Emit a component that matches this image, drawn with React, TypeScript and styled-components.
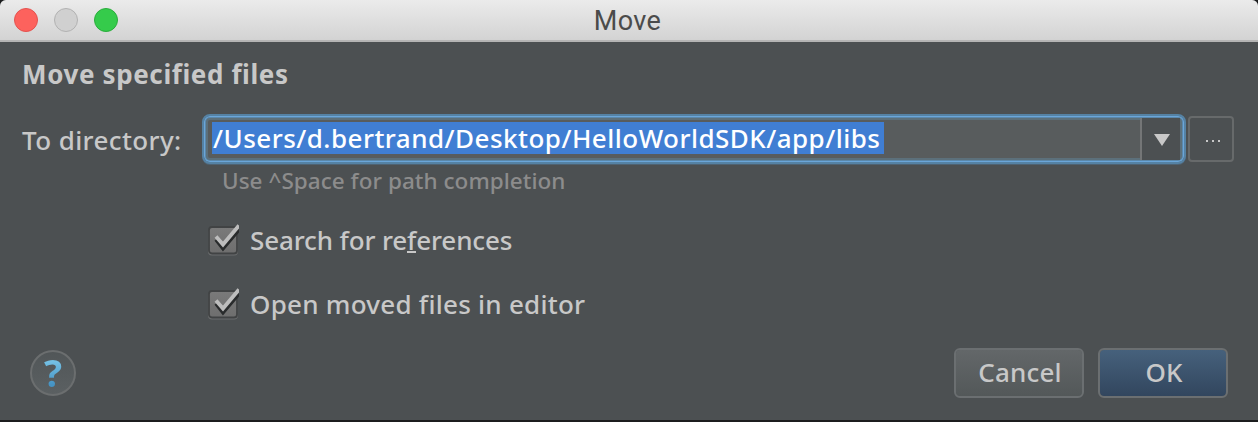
import React from "react";
import styled, { createGlobalStyle } from "styled-components";

const Global = createGlobalStyle`
  * { box-sizing: border-box; }
  body { margin: 0; background: #1c1d1e; overflow: hidden; }
`;

const Dialog = styled.div`
  width: 1258px;
  height: 420px;
  display: flex;
  flex-direction: column;
  background: #4c5052;
  border-radius: 6px 6px 0 0;
  overflow: hidden;
  color: #c8c8c8;
  font: 500 26px/32px "Noto Sans", sans-serif;
  white-space: nowrap;
`;

const TitleBar = styled.header`
  display: grid;
  grid-template-columns: 1fr auto 1fr;
  align-items: center;
  height: 42px;
  flex: none;
  padding: 0 14px;
  background: linear-gradient(#ebebeb, #d3d3d3);
  border-bottom: 2px solid #b4b4b4;
`;

const Lights = styled.div`
  display: flex;
  gap: 16px;
`;

const Light = styled.span<{ $fill: string; $edge: string }>`
  width: 24px;
  height: 24px;
  border-radius: 50%;
  background: ${(p) => p.$fill};
  border: 1px solid ${(p) => p.$edge};
`;

const Title = styled.h1`
  margin: 2px 3px 0 0;
  color: #4b4b4b;
  font: 400 27px/38px Roboto, sans-serif;
  letter-spacing: 0.4px;
`;

const Heading = styled.h2`
  margin: 16px 0 0 22px;
  font-size: 26px;
  font-weight: 700;
  line-height: 32px;
  letter-spacing: 0.62px;
`;

const DirectoryRow = styled.div`
  display: flex;
  align-items: center;
  height: 50px;
  margin-top: 24px;
  padding-left: 22px;
`;

const Label = styled.label`
  width: 180px;
  padding-top: 1px;
  letter-spacing: 0.4px;
`;

const Combo = styled.div`
  display: flex;
  width: 984px;
  height: 50px;
  padding: 4px;
  border: 2px solid #5582a4;
  border-radius: 8px;
  box-shadow: 0 1px 0 #4f6373, inset 0 0 0 1px #6ba6d9, inset 0 0 0 2px #5b88ab, inset 0 0 0 4px #5c707b;
  background: #585c5d;
`;

const PathField = styled.div`
  flex: 1;
  padding: 2px 0 0 4px;
`;

const Selection = styled.div`
  height: 32px;
  width: 672px;
  padding-left: 1px;
  background: #407ed3;
  color: #fff;
  letter-spacing: 0.48px;
`;

const DropButton = styled.div`
  display: flex;
  align-items: center;
  justify-content: center;
  width: 40px;
  margin: -2px 0;
  padding: 2px 0 0 2px;
  background: #4c5052;
  border-left: 2px solid #747677;
`;

const Browse = styled.button`
  display: flex;
  align-items: center;
  justify-content: center;
  gap: 4px;
  width: 46px;
  height: 46px;
  margin-left: 2px;
  padding: 4px 0 0 4px;
  background: #4c5052;
  border: 2px solid #676a6b;
  border-radius: 4px;
`;

const Dot = styled.i`
  width: 2px;
  height: 2px;
  background: #c8c8c8;
`;

const Hint = styled.p`
  margin: 3px 0 0 222px;
  color: #8c8c8c;
  font-size: 22.5px;
  line-height: 28px;
  letter-spacing: 0.04px;
`;

const Option = styled.label<{ $top: number; $spacing: number }>`
  display: flex;
  align-items: center;
  gap: 9px;
  height: 34px;
  margin: ${(p) => p.$top}px 0 0 207px;
  letter-spacing: ${(p) => p.$spacing}px;
`;

const OptionText = styled.span`
  height: 34px;
`;

const Mnemonic = styled.span`
  display: inline-block;
  height: 29px;
  line-height: 32px;
  border-bottom: 2px solid #c8c8c8;
`;

const Footer = styled.footer`
  display: flex;
  align-items: center;
  height: 50px;
  margin-top: 26px;
  padding: 0 30px;
`;

const Help = styled.button`
  display: flex;
  align-items: center;
  justify-content: center;
  width: 46px;
  height: 46px;
  margin-right: auto;
  padding: 0;
  border: 2px solid #6b6e6f;
  border-radius: 50%;
  background: linear-gradient(#515658, #5b6062);
  font: 700 38px/42px "Open Sans", sans-serif;
`;

const HelpMark = styled.span`
  margin-top: -3px;
  background: linear-gradient(#74c0e4 25%, #4593c4 80%);
  background-clip: text;
  color: transparent;
`;

const Action = styled.button<{ $primary?: boolean }>`
  width: 130px;
  height: 50px;
  margin-left: 14px;
  padding: 0 0 2px 2px;
  border: 2px solid #6b6f71;
  border-radius: 6px;
  background: ${(p) => (p.$primary ? "linear-gradient(#46617c, #32465e)" : "linear-gradient(#636769, #535859)")} padding-box;
  color: #c8c8c8;
  font: inherit;
  letter-spacing: 0.2px;
`;

const Check = ({ id }: { id: string }) => (
  <svg width="34" height="34" viewBox="0 0 34 34">
    <defs>
      <linearGradient id={id} x1="0" y1="0" x2="0" y2="1">
        <stop offset="0" stopColor="#7a7a7a" />
        <stop offset="1" stopColor="#6e6e6e" />
      </linearGradient>
      <clipPath id={`${id}-clip`}>
        <rect width="32" height="34" />
      </clipPath>
    </defs>
    <rect x="1" y="4.5" width="30" height="27" rx="4" fill="#6b6d6e" />
    <rect x="2" y="3" width="28" height="26.5" rx="3" fill={`url(#${id})`} stroke="#414344" strokeWidth="1.8" />
    <path d="M9 15.5L16 24.5L32 5.5" fill="none" stroke="#292b2c" strokeWidth="3.8" clipPath={`url(#${id}-clip)`} />
    <path d="M9 12.5L16 20.5L32 1.5" fill="none" stroke="#bdbdbd" strokeWidth="3.8" clipPath={`url(#${id}-clip)`} />
  </svg>
);

export default function App() {
  return (
    <>
      <Global />
      <Dialog>
        <TitleBar>
          <Lights>
            <Light $fill="#fd625d" $edge="#e4524f" />
            <Light $fill="#d0d0d0" $edge="#b2b2b2" />
            <Light $fill="#35cb4b" $edge="#2aad3c" />
          </Lights>
          <Title>Move</Title>
        </TitleBar>
        <Heading>Move specified files</Heading>
        <DirectoryRow>
          <Label>To directory:</Label>
          <Combo>
            <PathField>
              <Selection>/Users/d.bertrand/Desktop/HelloWorldSDK/app/libs</Selection>
            </PathField>
            <DropButton>
              <svg width="16" height="12" viewBox="0 0 16 12">
                <path d="M0 0H16L8 12Z" fill="#c8c8c8" />
              </svg>
            </DropButton>
          </Combo>
          <Browse aria-label="Browse">
            <Dot />
            <Dot />
            <Dot />
          </Browse>
        </DirectoryRow>
        <Hint>Use ^Space for path completion</Hint>
        <Option $top={29} $spacing={-0.13}>
          <Check id="search" />
          <OptionText>
            Search for re<Mnemonic>f</Mnemonic>erences
          </OptionText>
        </Option>
        <Option $top={30} $spacing={0.26}>
          <Check id="open" />
          <OptionText>Open moved files in editor</OptionText>
        </Option>
        <Footer>
          <Help aria-label="Help">
            <HelpMark>?</HelpMark>
          </Help>
          <Action>Cancel</Action>
          <Action $primary>OK</Action>
        </Footer>
      </Dialog>
    </>
  );
}
